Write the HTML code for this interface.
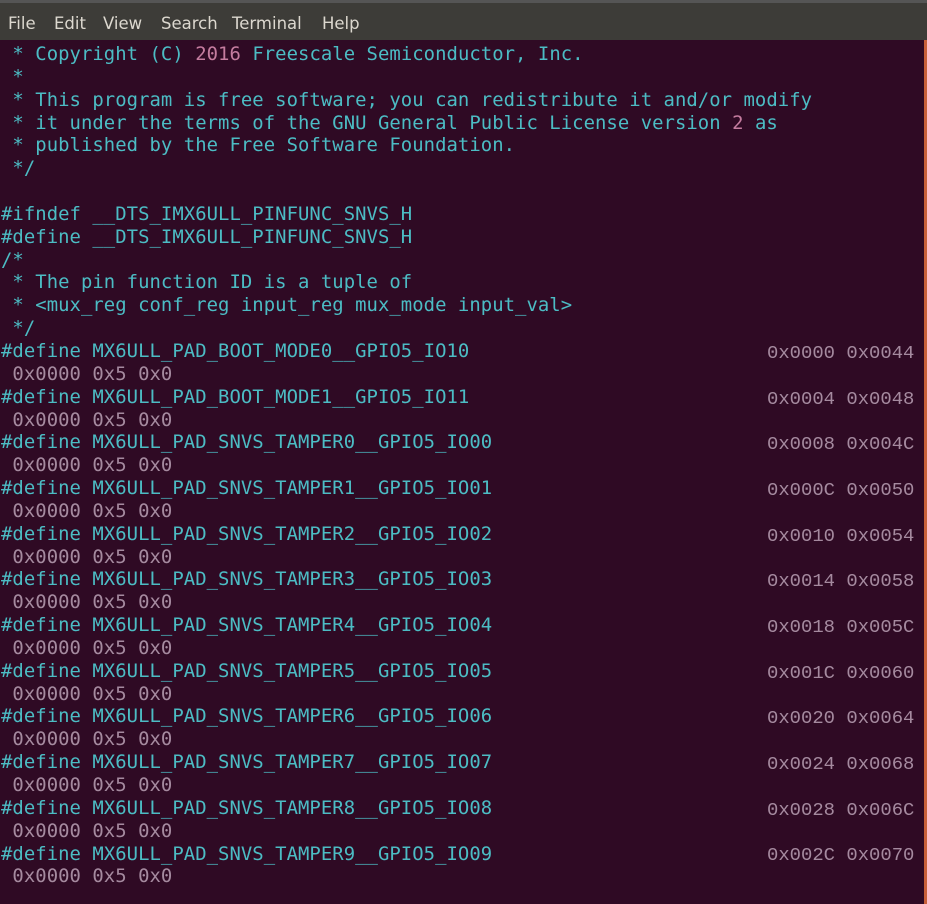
<!DOCTYPE html>
<html><head><meta charset="utf-8"><style>
body{margin:0;width:927px;height:904px;background:#2f0a24;overflow:hidden;position:relative;font-family:"Liberation Mono","DejaVu Sans Mono",monospace}
#menu{position:absolute;left:0;top:0;width:927px;height:40px;background:#3d3c38;border-top:3px solid #555;box-sizing:border-box}
#menu span{position:absolute;top:11px;font:16.5px "DejaVu Sans",sans-serif;color:#dcd8cf}
#edge{position:absolute;right:0;top:40px;width:3px;height:864px;background:#c8603a}
pre{margin:0;position:absolute;left:1px;top:43px;font-size:18.9px;line-height:22.85px;color:#4cbcc4;letter-spacing:0.05px}
.n{color:#c57c9f}.h{color:#a58a9f}
.r{position:absolute;left:767px;font-size:18.9px;color:#a58a9f;white-space:pre}
</style></head><body>
<div id="menu"><span style="left:8px">File</span><span style="left:54px">Edit</span><span style="left:103px">View</span><span style="left:161px">Search</span><span style="left:232px">Terminal</span><span style="left:322px">Help</span></div>
<div id="edge"></div>
<pre> * Copyright (C) <span class="n">2016</span> Freescale Semiconductor, Inc.
 *
 * This program is free software; you can redistribute it and/or modify
 * it under the terms of the GNU General Public License version <span class="n">2</span> as
 * published by the Free Software Foundation.
 */

#ifndef __DTS_IMX6ULL_PINFUNC_SNVS_H
#define __DTS_IMX6ULL_PINFUNC_SNVS_H
/*
 * The pin function ID is a tuple of
 * &lt;mux_reg conf_reg input_reg mux_mode input_val&gt;
 */
#define MX6ULL_PAD_BOOT_MODE0__GPIO5_IO10
<span class="h"> 0x0000 0x5 0x0</span>
#define MX6ULL_PAD_BOOT_MODE1__GPIO5_IO11
<span class="h"> 0x0000 0x5 0x0</span>
#define MX6ULL_PAD_SNVS_TAMPER0__GPIO5_IO00
<span class="h"> 0x0000 0x5 0x0</span>
#define MX6ULL_PAD_SNVS_TAMPER1__GPIO5_IO01
<span class="h"> 0x0000 0x5 0x0</span>
#define MX6ULL_PAD_SNVS_TAMPER2__GPIO5_IO02
<span class="h"> 0x0000 0x5 0x0</span>
#define MX6ULL_PAD_SNVS_TAMPER3__GPIO5_IO03
<span class="h"> 0x0000 0x5 0x0</span>
#define MX6ULL_PAD_SNVS_TAMPER4__GPIO5_IO04
<span class="h"> 0x0000 0x5 0x0</span>
#define MX6ULL_PAD_SNVS_TAMPER5__GPIO5_IO05
<span class="h"> 0x0000 0x5 0x0</span>
#define MX6ULL_PAD_SNVS_TAMPER6__GPIO5_IO06
<span class="h"> 0x0000 0x5 0x0</span>
#define MX6ULL_PAD_SNVS_TAMPER7__GPIO5_IO07
<span class="h"> 0x0000 0x5 0x0</span>
#define MX6ULL_PAD_SNVS_TAMPER8__GPIO5_IO08
<span class="h"> 0x0000 0x5 0x0</span>
#define MX6ULL_PAD_SNVS_TAMPER9__GPIO5_IO09
<span class="h"> 0x0000 0x5 0x0</span></pre>
<div class="r" style="top:342px">0x0000 0x0044</div>
<div class="r" style="top:388px">0x0004 0x0048</div>
<div class="r" style="top:433px">0x0008 0x004C</div>
<div class="r" style="top:479px">0x000C 0x0050</div>
<div class="r" style="top:525px">0x0010 0x0054</div>
<div class="r" style="top:570px">0x0014 0x0058</div>
<div class="r" style="top:616px">0x0018 0x005C</div>
<div class="r" style="top:662px">0x001C 0x0060</div>
<div class="r" style="top:707px">0x0020 0x0064</div>
<div class="r" style="top:753px">0x0024 0x0068</div>
<div class="r" style="top:799px">0x0028 0x006C</div>
<div class="r" style="top:844px">0x002C 0x0070</div>
</body></html>
